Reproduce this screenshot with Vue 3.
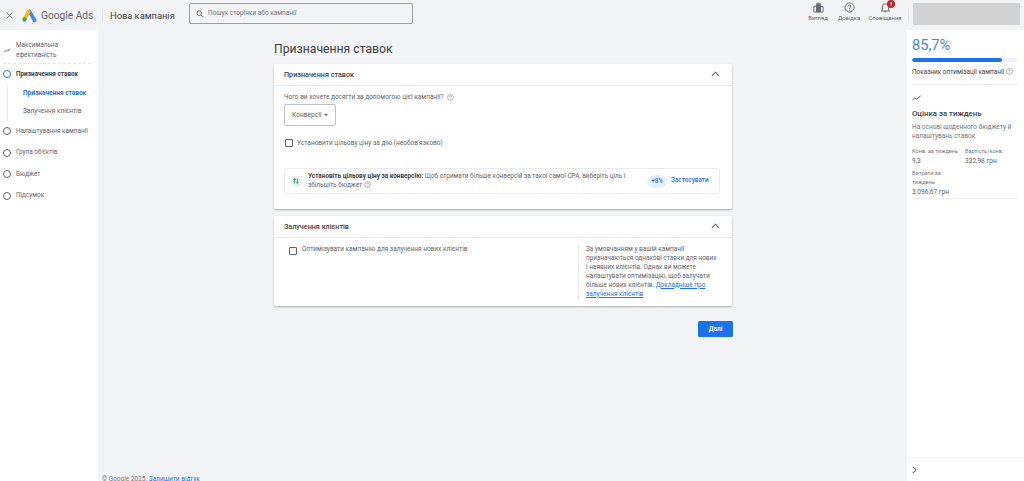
<script setup>
const steps = [
  { label: 'Налаштування кампанії' },
  { label: 'Група об\'єктів' },
  { label: 'Бюджет' },
  { label: 'Підсумок' },
]
</script>

<template>
  <div class="page">
    <header class="top">
      <svg class="close" viewBox="0 0 10 10"><path d="M1 1l8 8M9 1l-8 8" /></svg>
      <svg class="logo" viewBox="0 0 16 14">
        <path d="M5.400 1.600 8.600 0 15.400 11.400a2.100 2.100 0 0 1-3.600 2.100z" fill="#4285f4" />
        <path d="M5.600 1.200a2.100 2.100 0 0 1 3.400 2L4.200 12 .8 10z" fill="#fbbc04" />
        <circle cx="2.600" cy="11.300" r="2.300" fill="#34a853" />
      </svg>
      <span class="brand">Google Ads</span>
      <span class="divider"></span>
      <span class="crumb">Нова кампанія</span>
      <div class="search">
        <svg class="search-ic" viewBox="0 0 10 10"><circle cx="4" cy="4" r="2.900" /><path d="M6.200 6.200 9 9" /></svg>
        <span>Пошук сторінки або кампанії</span>
      </div>
      <div class="tools">
        <div class="tool">
          <svg viewBox="0 0 12 12" class="tool-ic"><path d="M1 4.500h3V11H1zM4 1.500h4V11H4zM8 5h3v6H8z" fill="none" stroke="#5f6368" /><rect x="4.500" y="2" width="3" height="9" fill="#5f6368" /></svg>
          <span>Вигляд</span>
        </div>
        <div class="tool help-tool">
          <svg viewBox="0 0 12 12" class="tool-ic"><circle cx="6" cy="6" r="5" fill="none" stroke="#5f6368" /><path d="M4.500 4.800A1.500 1.500 0 1 1 6.600 6.200c-.5.300-.6.500-.6 1" fill="none" stroke="#5f6368" /><circle cx="6" cy="8.700" r=".6" fill="#5f6368" /></svg>
          <span>Довідка</span>
        </div>
        <div class="tool tool-bell">
          <svg viewBox="0 0 12 12" class="tool-ic"><path d="M2.500 9V5.500a3.500 3.500 0 0 1 7 0V9l1 .8H1.500zM5 10.800h2" fill="none" stroke="#5f6368" /></svg>
          <span>Сповіщення</span>
          <b class="badge">!</b>
        </div>
      </div>
      <span class="divider tools-divider"></span>
      <div class="account"></div>
    </header>

    <div class="body">
      <nav class="side">
        <div class="perf">
          <svg viewBox="0 0 10 10" class="perf-ic"><path d="M.5 7 3.500 4.500l2 1.500L9 3" /></svg>
          <span>Максимальна<br />ефективність</span>
        </div>
        <div class="step active"><i class="dot"></i><span>Призначення ставок</span></div>
        <div class="subs">
          <div class="sub current">Призначення ставок</div>
          <div class="sub">Залучення клієнтів</div>
        </div>
        <div v-for="s in steps" :key="s.label" class="step"><i class="dot"></i><span>{{ s.label }}</span></div>
      </nav>

      <main class="main">
        <div class="column">
          <h1>Призначення ставок</h1>

          <section class="card first">
            <div class="card-head">
              <span>Призначення ставок</span>
              <svg class="chev" viewBox="0 0 10 6"><path d="M1 5l4-4 4 4" /></svg>
            </div>
            <div class="card-body">
              <div class="question">Чого ви хочете досягти за допомогою цієї кампанії? <svg class="help" viewBox="0 0 12 12"><circle cx="6" cy="6" r="5" /><path d="M4.500 4.800A1.500 1.500 0 1 1 6.600 6.200c-.5.300-.6.500-.6 1M6 8.200v1" /></svg></div>
              <div class="select">Конверсії <i class="caret"></i></div>
              <label class="check"><i class="box"></i><span>Установити цільову ціну за дію (необов'язково)</span></label>
              <div class="tip">
                <span class="tip-ic">
                  <svg viewBox="0 0 10 10"><path d="M3.300 8V2M1.800 3.500 3.300 2l1.500 1.500" stroke="#137333" /><path d="M6.700 2v6M5.200 6.500 6.700 8l1.500-1.500" stroke="#1a73e8" /></svg>
                </span>
                <div class="tip-text"><b>Установіть цільову ціну за конверсію:</b> Щоб отримати більше конверсій за такої самої CPA, виберіть ціль і збільшіть бюджет <svg class="help" viewBox="0 0 12 12"><circle cx="6" cy="6" r="5" /><path d="M4.500 4.800A1.500 1.500 0 1 1 6.600 6.200c-.5.300-.6.500-.6 1M6 8.200v1" /></svg></div>
                <span class="pill">+8%</span>
                <span class="apply">Застосувати</span>
              </div>
            </div>
          </section>

          <section class="card second">
            <div class="card-head">
              <span>Залучення клієнтів</span>
              <svg class="chev" viewBox="0 0 10 6"><path d="M1 5l4-4 4 4" /></svg>
            </div>
            <div class="split">
              <label class="check check-two"><i class="box"></i><span>Оптимізувати кампанію для залучення нових клієнтів</span></label>
              <p class="note">За умовчанням у вашій кампанії призначаються однакові ставки для нових і наявних клієнтів. Однак ви можете налаштувати оптимізацію, щоб залучати більше нових клієнтів. <a>Докладніше про залучення клієнтів</a></p>
            </div>
          </section>

          <div class="actions"><button>Далі</button></div>
        </div>
        <footer class="foot">© Google 2025. <a>Залишити відгук</a></footer>
      </main>

      <aside class="right">
        <div class="score">85,7%</div>
        <div class="bar"><div class="fill" :style="{ width: '85.7%' }"></div></div>
        <div class="score-label">Показник оптимізації кампанії <svg class="help" viewBox="0 0 12 12"><circle cx="6" cy="6" r="5" /><path d="M4.500 4.800A1.500 1.500 0 1 1 6.600 6.200c-.5.300-.6.500-.6 1M6 8.200v1" /></svg></div>
        <div class="week">
          <svg class="trend" viewBox="0 0 10 6"><path d="M.5 5.200 3.200 2.800l1.800 1.400L9.500.8" /></svg>
          <h2>Оцінка за тиждень</h2>
          <p>На основі щоденного бюджету й налаштувань ставок</p>
          <div class="stats">
            <div class="stat"><small>Конв. за тиждень</small><span>9,3</span></div>
            <div class="stat"><small>Вартість/конв.</small><span>332,98 грн</span></div>
            <div class="stat narrow"><small>Витрати за тиждень</small><span>3 096,67 грн</span></div>
          </div>
        </div>
        <div class="collapse">
          <svg viewBox="0 0 6 10"><path d="M1 1l4 4-4 4" /></svg>
        </div>
      </aside>
    </div>
  </div>
</template>

<style>
html, body { margin: 0; background: #f1f3f4; }
</style>

<style scoped>
.page {
  width: 1024px; height: 481px; overflow: hidden; display: flex; flex-direction: column;
  background: #f1f3f4; color: #5f6368; font-family: Roboto, "Liberation Sans", sans-serif; font-size: 6.500px; line-height: 9px;
}
.top { height: 30px; flex: none; display: flex; align-items: center; }
.close { width: 7px; height: 7px; margin-left: 6px; fill: none; stroke: #5f6368; stroke-width: 1.200; }
.logo { width: 15px; height: 13px; margin-left: 9px; }
.brand { margin-left: 4px; font-size: 10.200px; color: #5f6368; width: 61px; white-space: nowrap; }
.divider { width: 1px; height: 14px; background: #e0e3e6; }
.crumb { margin-left: 7px; font-size: 9.300px; color: #3c4043; white-space: nowrap; width: 71px; }
.search {
  width: 224px; height: 21px; box-sizing: border-box; margin: 3px 0 0 8px; align-self: flex-start; border: 1px solid #9aa0a6; border-radius: 2px;
  display: flex; align-items: center; font-size: 6.500px; color: #70757a;
}
.search-ic { width: 8px; height: 8px; margin: 0 4px 0 6px; fill: none; stroke: #5f6368; stroke-width: 1.100; }
.tools { margin-left: auto; display: flex; align-self: flex-start; padding-top: 2px; }
.tool { position: relative; display: flex; flex-direction: column; align-items: center; font-size: 5.800px; line-height: 7px; white-space: nowrap; color: #5f6368; width: 20px; }
.help-tool { margin-left: 11px; }
.tool-bell { width: 32px; margin-left: 10px; }
.tool-ic { width: 11px; height: 11px; margin-bottom: 2px; }
.badge {
  position: absolute; left: 18px; top: -2px; width: 8px; height: 8px; border-radius: 50%; background: #c5221f; color: #fff;
  font-size: 6px; line-height: 8px; text-align: center;
}
.tools-divider { margin-left: 7px; }
.account { width: 107px; height: 22px; align-self: flex-start; background: #d2d2d2; margin: 3px 4px 0 4px; border-radius: 1px; }

.body { flex: 1; display: flex; min-height: 0; }
.side { width: 100px; flex: none; background: #fff; box-sizing: border-box; padding-top: 9px; border-right: 1px solid #eceef0; }
.perf {
  margin: 0 8px 0 3px; height: 23px; padding-bottom: 1px; display: flex; align-items: center; border-bottom: 1px dashed #e6e8ea;
  font-size: 6.400px; line-height: 9.300px; color: #5f6368;
}
.perf-ic { width: 7px; height: 7px; margin: 0 5px 0 1px; fill: none; stroke: #5f6368; stroke-width: 1.200; flex: none; }
.step { height: 21.500px; display: flex; align-items: center; padding-left: 3px; font-size: 6.400px; white-space: nowrap; color: #5f6368; }
.step.active { height: 20.500px; font-weight: 700; color: #3c4043; }
.dot { width: 6px; height: 6px; border: 1.100px solid #5f6368; border-radius: 50%; margin-right: 5px; flex: none; }
.active .dot { border-color: #1a73e8; }
.subs { margin-left: 7px; padding-left: 15px; border-left: 1px solid #e8eaed; height: 36px; }
.sub { height: 18px; display: flex; align-items: center; white-space: nowrap; font-size: 6.500px; }
.sub.current { color: #1a73e8; font-weight: 700; }

.main { flex: 1; min-width: 0; display: flex; flex-direction: column; }
.column { width: 458px; margin-left: 174px; flex: 1; }
h1 { margin: 0; padding-top: 11px; height: 34px; box-sizing: border-box; font-size: 12.200px; line-height: 16px; font-weight: 400; color: #3c4043; white-space: nowrap; }
.card { background: #fff; border-radius: 1.500px; box-shadow: 0 1px 2px rgba(60, 64, 67, .4); }
.first { height: 145px; }
.second { height: 90px; margin-top: 7px; }
.card-head {
  height: 21.500px; box-sizing: border-box; display: flex; align-items: center; justify-content: space-between; padding: 0 12px 0 10px;
  border-bottom: 1px solid #e8eaed; font-size: 7.200px; font-weight: 500; color: #3c4043;
}
.chev { width: 9px; height: 6px; fill: none; stroke: #5f6368; stroke-width: 1.200; }
.card-body { padding: 7px 12px 0 10px; }
.question { font-size: 6.500px; line-height: 9px; white-space: nowrap; display: flex; align-items: center; gap: 4px; }
.help { width: 7px; height: 7px; fill: none; stroke: #70757a; stroke-width: .9; vertical-align: -1px; flex: none; }
.select {
  margin-top: 2.500px; width: 52px; height: 22px; box-sizing: border-box; border: 1px solid #bdc1c6; border-radius: 2px; display: flex; align-items: center;
  padding-left: 7px; gap: 3px; font-size: 6.600px;
}
.caret { width: 0; height: 0; border: 2.200px solid transparent; border-top-color: #5f6368; border-bottom: 0; }
.check { display: flex; align-items: center; gap: 4px; font-size: 6.500px; white-space: nowrap; }
.card-body .check { margin-top: 12.500px; padding-left: 1px; }
.box { width: 6px; height: 6px; border: 1.100px solid #5f6368; border-radius: 1px; flex: none; display: block; }
.tip {
  margin-top: 20.500px; height: 26px; box-sizing: border-box; border: 1px solid #e8eaed; border-radius: 3px; display: flex; align-items: center;
  padding: 0 8px 0 5.500px; font-size: 6.400px; line-height: 9.500px;
}
.tip-ic { width: 11px; height: 11px; border-radius: 50%; background: #e6f4ea; flex: none; display: flex; align-items: center; justify-content: center; margin-right: 6.500px; }
.tip-ic svg { width: 8px; height: 8px; fill: none; stroke-width: 1; }
.tip-text { width: 325px; flex: none; }
.tip-text b { color: #3c4043; }
.pill { margin-left: 14px; width: 20px; height: 13px; border-radius: 6.500px; background: #e8f0fe; color: #1a73e8; font-size: 6.300px; line-height: 13px; text-align: center; font-weight: 500; flex: none; }
.apply { margin-left: 4px; color: #1a73e8; font-size: 6.400px; font-weight: 500; white-space: nowrap; }
.split { display: flex; padding-top: 7px; }
.check-two { width: 289px; margin-left: 15px; align-self: flex-start; align-items: flex-start; gap: 5px; flex: none; height: 51px; }
.check-two .box { margin-top: 2px; }
.note {
  margin: 0; padding-left: 7px; width: 139px; box-sizing: border-box; height: 55px; border-left: 1px solid #e8eaed; font-size: 6.450px; line-height: 9px; color: #5f6368;
}
a { color: #1a73e8; }
.note a { text-decoration: underline; }
.actions { display: flex; justify-content: flex-end; margin-top: 15px; margin-right: -1px; }
button {
  width: 35px; height: 16px; padding: 0; border: 0; border-radius: 1.500px; background: #1a73e8; color: #fff; font: 500 6.500px Roboto, sans-serif;
}
.foot { flex: none; height: 6px; line-height: 9px; padding-left: 2px; font-size: 6.500px; color: #70757a; white-space: nowrap; }

.right { width: 119px; flex: none; background: #fff; box-sizing: border-box; padding: 0 7px 0 6px; display: flex; flex-direction: column; border-left: 1px solid #eceef0; }
.score { margin-top: 6px; font-size: 14.600px; line-height: 18px; color: #4285f4; }
.bar { margin-top: 4px; height: 4px; border-radius: 2px; background: #e8f0fe; overflow: hidden; flex: none; }
.fill { height: 100%; background: #1a73e8; border-radius: 2px; }
.score-label { margin-top: 5.500px; font-size: 6.400px; line-height: 9px; white-space: nowrap; color: #3c4043; padding-bottom: 7.500px; border-bottom: 1px solid #e8eaed; }
.week { border-bottom: 1px solid #eceef0; height: 114px; box-sizing: border-box; flex: none; }
.trend { display: block; width: 9px; height: 6px; margin-top: 9.500px; fill: none; stroke: #3c4043; stroke-width: 1; }
h2 { margin: 8.500px 0 0; font-size: 7.800px; line-height: 10px; font-weight: 500; color: #3c4043; white-space: nowrap; }
.week p { margin: 3.800px 0 0; font-size: 6.500px; line-height: 9.300px; color: #70757a; }
.stats { display: grid; grid-template-columns: 53px 1fr; row-gap: 3px; margin-top: 6px; }
.stat { display: flex; flex-direction: column; font-size: 6.600px; line-height: 10px; }
.stat small { font-size: 5.600px; line-height: 9px; white-space: nowrap; color: #70757a; }
.stat.narrow { grid-column: 1; }
.stat.narrow small { white-space: normal; width: 36px; }
.stat.narrow span { white-space: nowrap; }
.collapse { margin: auto -7px 0 -6px; height: 23px; border-top: 1px solid #f1f3f4; display: flex; align-items: center; padding-left: 6px; }
.collapse svg { width: 5px; height: 8px; fill: none; stroke: #5f6368; stroke-width: 1.300; }
</style>
